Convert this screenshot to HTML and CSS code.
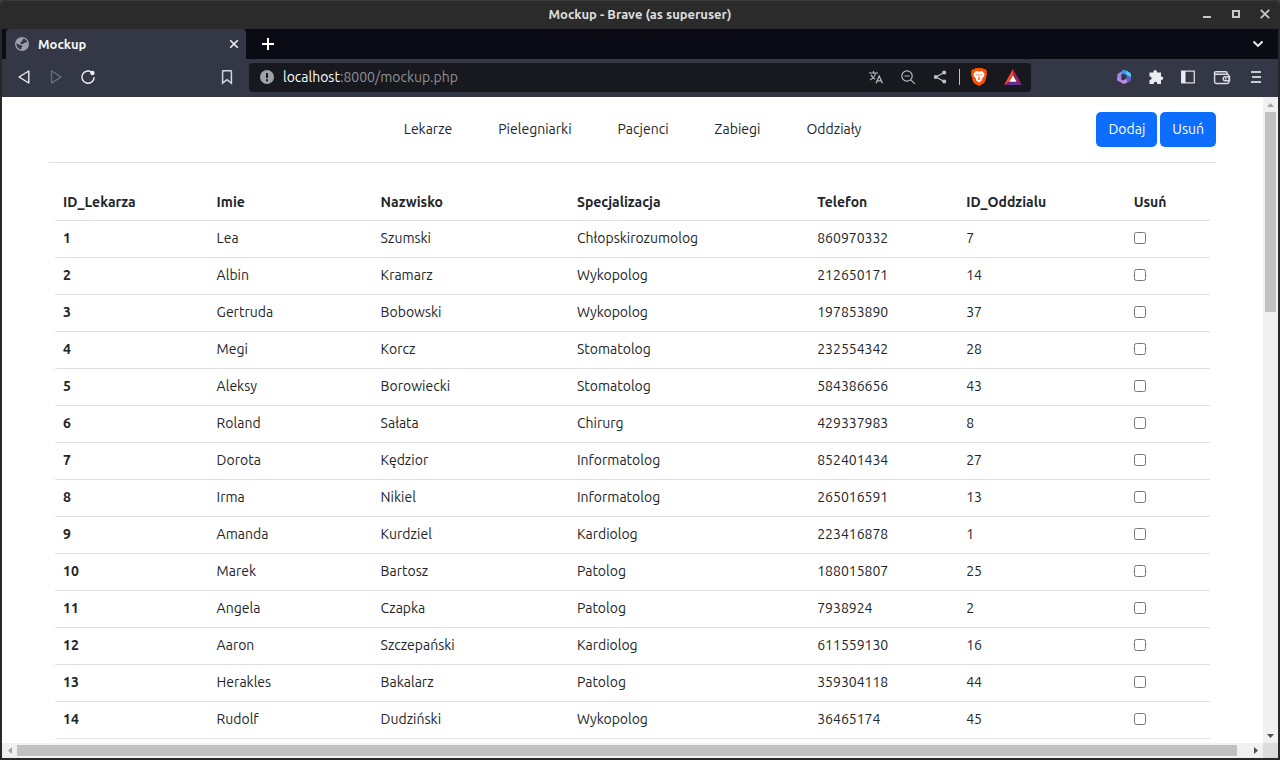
FILE: index.html
```html
<!DOCTYPE html>
<html lang="pl">
<head>
<meta charset="utf-8">
<meta name="viewport" content="width=device-width, initial-scale=1">
<title>Mockup</title>
<link rel="stylesheet" href="styles.css">
</head>
<body>
<div class="window">
  <header class="titlebar">
    <span class="titlebar-text">Mockup - Brave (as superuser)</span>
    <div class="window-controls">
      <button class="win-btn" aria-label="Minimize"><svg width="10" height="10" viewBox="0 0 10 10"><path d="M1 7h8v2H1z" fill="#c8c8c8"/></svg></button>
      <button class="win-btn" aria-label="Maximize"><svg width="10" height="10" viewBox="0 0 10 10"><path d="M2 2h6v6H2z" fill="none" stroke="#c8c8c8" stroke-width="2"/></svg></button>
      <button class="win-btn" aria-label="Close"><svg width="10" height="10" viewBox="0 0 10 10"><path d="M.8.8l8.4 8.4M9.2.8L.8 9.2" stroke="#c8c8c8" stroke-width="1.8"/></svg></button>
    </div>
  </header>

  <div class="tabstrip">
    <div class="tab">
      <svg width="14" height="14" viewBox="0 0 14 14"><circle cx="7" cy="7" r="7" fill="#9c9eab"/><path d="M8.2 1.3c1.7.4 3.2 1.6 3.9 3.2l-1 1.1-2 .4-.9 1.1H5.8L5 6l1.4-.8.3-1.5 1.5-.8zM1.4 6.3l2.8 1.5 2.5.5.7 1.3-1 1.2-.3 1.9C3.300 12.100 1.200 9.600 1.400 6.300z" fill="#343746"/></svg>
      <span class="tab-title">Mockup</span>
      <button class="tab-close" aria-label="Close tab"><svg width="10" height="10" viewBox="0 0 10 10"><path d="M1.200 1.200l7.600 7.600M8.800 1.200L1.200 8.800" stroke="#f2f2f4" stroke-width="1.600"/></svg></button>
    </div>
    <button class="strip-btn" aria-label="New tab"><svg width="12" height="12" viewBox="0 0 12 12"><path d="M6 0v12M0 6h12" stroke="#fff" stroke-width="2"/></svg></button>
    <button class="strip-btn strip-end" aria-label="Search tabs"><svg width="12" height="8" viewBox="0 0 12 8"><path d="M1.500 1.500L6 6l4.500-4.500" fill="none" stroke="#f2f2f4" stroke-width="1.800"/></svg></button>
  </div>

  <div class="toolbar">
    <div class="nav-tools">
      <button class="tool" aria-label="Back"><svg width="16" height="16" viewBox="0 0 16 16"><path d="M3 8L12.800 2v12z" fill="none" stroke="#ededf0" stroke-width="1.400" stroke-linejoin="round"/></svg></button>
      <button class="tool" aria-label="Forward"><svg width="16" height="16" viewBox="0 0 16 16"><path d="M13 8L3.500 1.900v12.200z" fill="none" stroke="#6c6f7d" stroke-width="1.300" stroke-linejoin="round"/></svg></button>
      <button class="tool" aria-label="Reload"><svg width="16" height="16" viewBox="0 0 16 16"><path d="M11.500 3.100A6.100 6.100 0 1 0 14.100 8.800" fill="none" stroke="#ededf0" stroke-width="1.400" stroke-linecap="round"/><circle cx="12.400" cy="4" r="2.200" fill="#ededf0"/></svg></button>
      <button class="tool tool-end" aria-label="Bookmark"><svg width="16" height="16" viewBox="0 0 16 16"><path d="M4.200 1.700h7.600a.6.600 0 0 1 .6.600v11.900L8 10.700l-4.400 3.500V2.300a.6.600 0 0 1 .6-.6z" fill="none" stroke="#d4d5da" stroke-width="1.500"/></svg></button>
    </div>
    <div class="address">
      <svg width="14" height="14" viewBox="0 0 14 14"><circle cx="7" cy="7" r="7" fill="#a0a2ab"/><path d="M6 3h2v5H6zM6 9.300h2v2H6z" fill="#17191f"/></svg>
      <label class="host" for="url">localhost</label>
      <input class="path" id="url" type="text" value=":8000/mockup.php">
      <button class="tool" aria-label="Translate"><svg width="16" height="16" viewBox="0 0 16 16" fill="none" stroke="#b9bac0" stroke-width="1.200"><path d="M1 4h9M5.500 2v2M2 11c3-1.500 5-4 5.600-7M3 5.800c.8 2 2.300 3.300 4.200 4.400M8 14.200L11.200 7l3.300 7.200M9 11.800h4.400"/></svg></button>
      <button class="tool" aria-label="Zoom out"><svg width="16" height="16" viewBox="0 0 16 16" fill="none" stroke="#b9bac0" stroke-width="1.200"><circle cx="7" cy="7" r="5.200"/><path d="M4.500 7h5M10.800 10.800l4 4"/></svg></button>
      <button class="tool" aria-label="Share"><svg width="16" height="16" viewBox="0 0 16 16"><path d="M12.200 3.500L4 8l8.200 4.500" fill="none" stroke="#c0c1c6" stroke-width="1.300"/><circle cx="12.200" cy="3.500" r="2" fill="#c0c1c6"/><circle cx="3.700" cy="8" r="2" fill="#c0c1c6"/><circle cx="12.200" cy="12.500" r="2" fill="#c0c1c6"/></svg></button>
      <span class="divider"></span>
      <button class="tool brave" aria-label="Brave Shields"><svg width="16" height="18" viewBox="0 0 16 18"><path d="M4.500 0h7l1.500 1.300 1.300-.2L16 3.200l-.5 1.500.5 1.600-2 7.200c-.3 1-1 1.700-1.900 2.300L8 18l-4.100-2.200C3 15.200 2.300 14.500 2 13.500L0 6.300l.5-1.600L0 3.200l1.700-2.100 1.300.2z" fill="#ff5000"/><path d="M4.800 3l3.200.6 3.200-.6 2.400 2.900-.8 2.500-1.900 2.400.4 1.200L8 14.600 4.700 12l.4-1.200-1.900-2.400-.8-2.500z" fill="#fff"/><path d="M4.300 6.200l2.600.6-1 1zM11.700 6.200l-2.600.6 1 1zM7.600 5.500h.8L8.200 9l1 1.200L8 10.900l-1.200-.7L7.800 9zM6 12.100l2-.9 2 .9-2-.2z" fill="#ff5000"/></svg></button>
      <button class="tool" aria-label="Brave Rewards"><svg width="18" height="16" viewBox="0 0 18 16"><path d="M9 0L0 16l5.500-3.200L9 6.500z" fill="#ff4724"/><path d="M9 0l9 16-5.500-3.200L9 6.500z" fill="#9e1f63"/><path d="M0 16h18l-5.500-3.200h-7z" fill="#662d91"/><path d="M9 6.500l3.600 6.300H5.400z" fill="#fff"/></svg></button>
    </div>
    <div class="ext-tools">
      <button class="tool" aria-label="Microsoft 365"><svg width="16" height="16" viewBox="0 0 16 16"><path d="M8.500.8L3 3.900C1.800 4.600 1.200 5.400 1.200 6.600v4.600L5.300 12V6z" fill="#9a86e2"/><path d="M1.200 9.500v1.700l5.500 3.400c.9.500 1.700.5 2.600 0l4-2.400-2.900-2.400-3.600 1.700-1.500-1z" fill="#c08ae6"/><path d="M6.500 1.200c1-.5 2-.5 3 0L13.500 3.500c1 .6 1.500 1.300 1.500 2.500v2.500L10.600 6 6.300 4.500 5.300 6z" fill="#3b93ea"/><path d="M10 1.500l3.500 2c1 .6 1.500 1.500 1.500 2.800V8l-4.600-2z" fill="#4fcaf4"/><path d="M10.600 6.500L15 8v2.500c0 .9-.3 1.400-1 1.800l-2.600 1.300-.9-3.600z" fill="#5b62c8"/></svg></button>
      <button class="tool" aria-label="Extensions"><svg width="16" height="16" viewBox="0 0 16 16"><path d="M1.500 3.500h4c-.7-3.400 4-3.400 3.500 0h4v4c3-.3 3 3.700 0 3.500v4H9.300c.2-3-3.800-3-3.600 0H1.500v-4c2.800.1 2.800-3.600 0-3.500z" fill="#ededf0"/></svg></button>
      <button class="tool" aria-label="Sidebar"><svg width="16" height="16" viewBox="0 0 16 16"><path d="M1.700 2.200h12.600v11.600H1.700z" fill="none" stroke="#d9dade" stroke-width="1.300"/><path d="M1.500 2h4v12h-4z" fill="#ededf0"/></svg></button>
      <button class="tool tool-wallet" aria-label="Wallet"><svg width="18" height="16" viewBox="0 0 18 16" fill="none" stroke="#dcdde1" stroke-width="1.400"><path d="M3 2.800h9.500c1 0 1.800.6 1.800 1.600v.8H3c-2.200 0-2.200-2.400 0-2.400zM1.600 4v8.800c0 1 .7 1.700 1.700 1.700h11c1 0 1.700-.7 1.700-1.700V7c0-1.100-.7-1.800-1.700-1.800M16.500 7.800h-4.300a2 2 0 0 0 0 4h4.300zM12 9.800h1.500"/></svg></button>
      <button class="tool tool-menu" aria-label="Menu"><svg width="16" height="16" viewBox="0 0 16 16"><path d="M3 2h10v2H3zM4 7h9v2H4zM3 12h10v2H3z" fill="#c9cad0"/></svg></button>
    </div>
  </div>

  <div class="viewport">
    <main class="page">
      <header class="site-header">
        <nav class="site-nav">
          <a href="#lekarze">Lekarze</a>
          <a href="#pielegniarki">Pielegniarki</a>
          <a href="#pacjenci">Pacjenci</a>
          <a href="#zabiegi">Zabiegi</a>
          <a href="#oddzialy">Oddziały</a>
        </nav>
        <div class="actions">
          <button class="btn">Dodaj</button>
          <button class="btn">Usuń</button>
        </div>
      </header>
      <div class="table-wrap">
        <table class="table">
          <colgroup><col class="c-id"><col class="c-first"><col class="c-last"><col class="c-spec"><col class="c-phone"><col class="c-ward"><col class="c-del"></colgroup>
          <thead>
            <tr><th scope="col">ID_Lekarza</th><th scope="col">Imie</th><th scope="col">Nazwisko</th><th scope="col">Specjalizacja</th><th scope="col">Telefon</th><th scope="col">ID_Oddzialu</th><th scope="col">Usuń</th></tr>
          </thead>
          <tbody>
            <tr><th scope="row">1</th><td>Lea</td><td>Szumski</td><td>Chłopskirozumolog</td><td>860970332</td><td>7</td><td><input class="check" type="checkbox" aria-label="Usuń 1"></td></tr>
            <tr><th scope="row">2</th><td>Albin</td><td>Kramarz</td><td>Wykopolog</td><td>212650171</td><td>14</td><td><input class="check" type="checkbox" aria-label="Usuń 2"></td></tr>
            <tr><th scope="row">3</th><td>Gertruda</td><td>Bobowski</td><td>Wykopolog</td><td>197853890</td><td>37</td><td><input class="check" type="checkbox" aria-label="Usuń 3"></td></tr>
            <tr><th scope="row">4</th><td>Megi</td><td>Korcz</td><td>Stomatolog</td><td>232554342</td><td>28</td><td><input class="check" type="checkbox" aria-label="Usuń 4"></td></tr>
            <tr><th scope="row">5</th><td>Aleksy</td><td>Borowiecki</td><td>Stomatolog</td><td>584386656</td><td>43</td><td><input class="check" type="checkbox" aria-label="Usuń 5"></td></tr>
            <tr><th scope="row">6</th><td>Roland</td><td>Sałata</td><td>Chirurg</td><td>429337983</td><td>8</td><td><input class="check" type="checkbox" aria-label="Usuń 6"></td></tr>
            <tr><th scope="row">7</th><td>Dorota</td><td>Kędzior</td><td>Informatolog</td><td>852401434</td><td>27</td><td><input class="check" type="checkbox" aria-label="Usuń 7"></td></tr>
            <tr><th scope="row">8</th><td>Irma</td><td>Nikiel</td><td>Informatolog</td><td>265016591</td><td>13</td><td><input class="check" type="checkbox" aria-label="Usuń 8"></td></tr>
            <tr><th scope="row">9</th><td>Amanda</td><td>Kurdziel</td><td>Kardiolog</td><td>223416878</td><td>1</td><td><input class="check" type="checkbox" aria-label="Usuń 9"></td></tr>
            <tr><th scope="row">10</th><td>Marek</td><td>Bartosz</td><td>Patolog</td><td>188015807</td><td>25</td><td><input class="check" type="checkbox" aria-label="Usuń 10"></td></tr>
            <tr><th scope="row">11</th><td>Angela</td><td>Czapka</td><td>Patolog</td><td>7938924</td><td>2</td><td><input class="check" type="checkbox" aria-label="Usuń 11"></td></tr>
            <tr><th scope="row">12</th><td>Aaron</td><td>Szczepański</td><td>Kardiolog</td><td>611559130</td><td>16</td><td><input class="check" type="checkbox" aria-label="Usuń 12"></td></tr>
            <tr><th scope="row">13</th><td>Herakles</td><td>Bakalarz</td><td>Patolog</td><td>359304118</td><td>44</td><td><input class="check" type="checkbox" aria-label="Usuń 13"></td></tr>
            <tr><th scope="row">14</th><td>Rudolf</td><td>Dudziński</td><td>Wykopolog</td><td>36465174</td><td>45</td><td><input class="check" type="checkbox" aria-label="Usuń 14"></td></tr>
          </tbody>
        </table>
      </div>
    </main>
    <div class="scroll scroll-v">
      <button class="arrow" aria-label="Scroll up"><svg width="7" height="4" viewBox="0 0 7 4"><path d="M0 4h7L3.500 0z" fill="#a3a3a3"/></svg></button>
      <div class="track"><div class="thumb"></div></div>
      <button class="arrow" aria-label="Scroll down"><svg width="7" height="4" viewBox="0 0 7 4"><path d="M0 0h7L3.500 4z" fill="#505050"/></svg></button>
    </div>
    <div class="scroll scroll-h">
      <button class="arrow" aria-label="Scroll left"><svg width="4" height="7" viewBox="0 0 4 7"><path d="M4 0v7L0 3.500z" fill="#a3a3a3"/></svg></button>
      <div class="track"><div class="thumb"></div></div>
      <button class="arrow" aria-label="Scroll right"><svg width="4" height="7" viewBox="0 0 4 7"><path d="M0 0v7l4-3.500z" fill="#505050"/></svg></button>
    </div>
    <div class="corner"></div>
  </div>
</div>
</body>
</html>
```
FILE: styles.css
```css
* { box-sizing: border-box; }

body {
  margin: 0;
  background: #3c3c3c;
  color: #212529;
  font-family: Ubuntu, "Noto Sans", "Open Sans", sans-serif;
  font-size: 14px;
  line-height: 20px;
}

button {
  margin: 0;
  padding: 0;
  border: 0;
  background: none;
  color: inherit;
  font: inherit;
}

svg { display: block; flex: none; }

.window {
  display: flex;
  flex-direction: column;
  height: 100vh;
  padding: 0 2px 2px;
  overflow: hidden;
  border-radius: 8px 8px 0 0;
  background: #282828;
}

/* Title bar */
.titlebar {
  display: grid;
  grid-template-columns: 1fr auto 1fr;
  align-items: center;
  height: 29px;
  flex: none;
  margin: 0 -2px;
  padding-bottom: 2px;
  border-top: 1px solid #3b3b3b;
  background: #2b2b2b;
  color: #dfdfdf;
  font-size: 13px;
  font-weight: 700;
}
.titlebar-text { grid-column: 2; }
.window-controls { display: flex; justify-content: flex-end; padding-right: 1px; }
.win-btn { display: grid; place-items: center; width: 29px; height: 24px; }

/* Tabs */
.tabstrip {
  display: flex;
  align-items: center;
  height: 30px;
  flex: none;
  padding: 0 4px;
  background: #0a0b14;
}
.tab {
  display: flex;
  align-items: center;
  gap: 9px;
  width: 240px;
  height: 30px;
  padding: 0 4px 0 9px;
  border-radius: 4px 4px 0 0;
  background: #343746;
  color: #f6f6f8;
  font-size: 13px;
  font-weight: 600;
}
.tab-close { display: grid; place-items: center; width: 16px; height: 16px; margin-left: auto; }
.strip-btn { display: grid; place-items: center; width: 32px; height: 28px; margin-left: 6px; }
.strip-end { margin-left: auto; }

/* Toolbar */
.toolbar {
  display: flex;
  align-items: center;
  height: 38px;
  flex: none;
  padding: 0 6px 1px;
  background: #343746;
}
.tool { display: grid; place-items: center; width: 32px; height: 28px; flex: none; }
.nav-tools { display: flex; width: 241px; padding: 0 6px 1px 0; }
.tool-end { margin-left: auto; }
.address {
  display: flex;
  align-items: center;
  flex: 1;
  height: 29px;
  min-width: 0;
  padding: 0 2px 1px 11px;
  border-radius: 4px;
  background: #17191f;
}
.host { margin-left: 9px; color: #fff; }
.path {
  flex: 1;
  min-width: 0;
  padding: 0;
  border: 0;
  outline: 0;
  background: none;
  color: #8f9094;
  font: inherit;
}
.divider { width: 1px; height: 16px; margin: 0 3px; background: #c0c1c6; }
.brave { margin-right: 2px; }
.ext-tools { display: flex; margin-left: 77px; padding-bottom: 1px; }
.tool-wallet, .tool-menu { margin-left: 2px; }

/* Page area with scrollbars */
.viewport {
  display: grid;
  grid-template-columns: minmax(0, 1fr) 15px;
  grid-template-rows: minmax(0, 1fr) 15px;
  flex: 1;
  min-height: 0;
  background: #fff;
}
.page { overflow: hidden; padding: 0 47px; }
.scroll { display: flex; background: #f1f1f1; }
.scroll-v { flex-direction: column; }
.arrow { display: grid; place-items: center; width: 15px; height: 15px; flex: none; }
.track { display: flex; flex: 1; }
.thumb { background: #c1c1c1; }
.scroll-v .track { padding: 0 2px; }
.scroll-v .thumb { width: 100%; height: 32.500%; }
.scroll-h .track { padding: 2px 0; }
.scroll-h .thumb { width: 99.100%; }
.corner { background: #dcdcdc; }

/* Site header */
.site-header {
  display: grid;
  grid-template-columns: 1fr auto 1fr;
  align-items: start;
  padding: 15px 0;
  border-bottom: 1px solid #dee2e6;
}
.site-nav { display: flex; grid-column: 2; gap: 46px; padding: 7px 0; }
.site-nav a { color: #212529; text-decoration: none; }
.actions { display: flex; justify-content: flex-end; gap: 3px; }
.btn {
  padding: 7px 12px 8px;
  border-radius: 5px;
  background: #0d6efd;
  color: #fff;
}

/* Data table */
.table-wrap { padding: 20px 6px 0; }
.table { width: 100%; border-collapse: collapse; table-layout: fixed; }
.table th, .table td {
  height: 37px;
  padding: 7px 8px 8px;
  border-bottom: 1px solid #dee2e6;
  text-align: left;
  vertical-align: middle;
}
.table th { font-weight: 700; }
.table thead th { padding: 9px 8px 7px; }
.c-id { width: 13.300%; }
.c-first { width: 14.200%; }
.c-last { width: 17%; }
.c-spec { width: 20.800%; }
.c-phone { width: 12.900%; }
.c-ward { width: 14.500%; }
.c-del { width: 7.300%; }
.check { display: block; width: 12px; height: 12px; margin: 0; }
```
